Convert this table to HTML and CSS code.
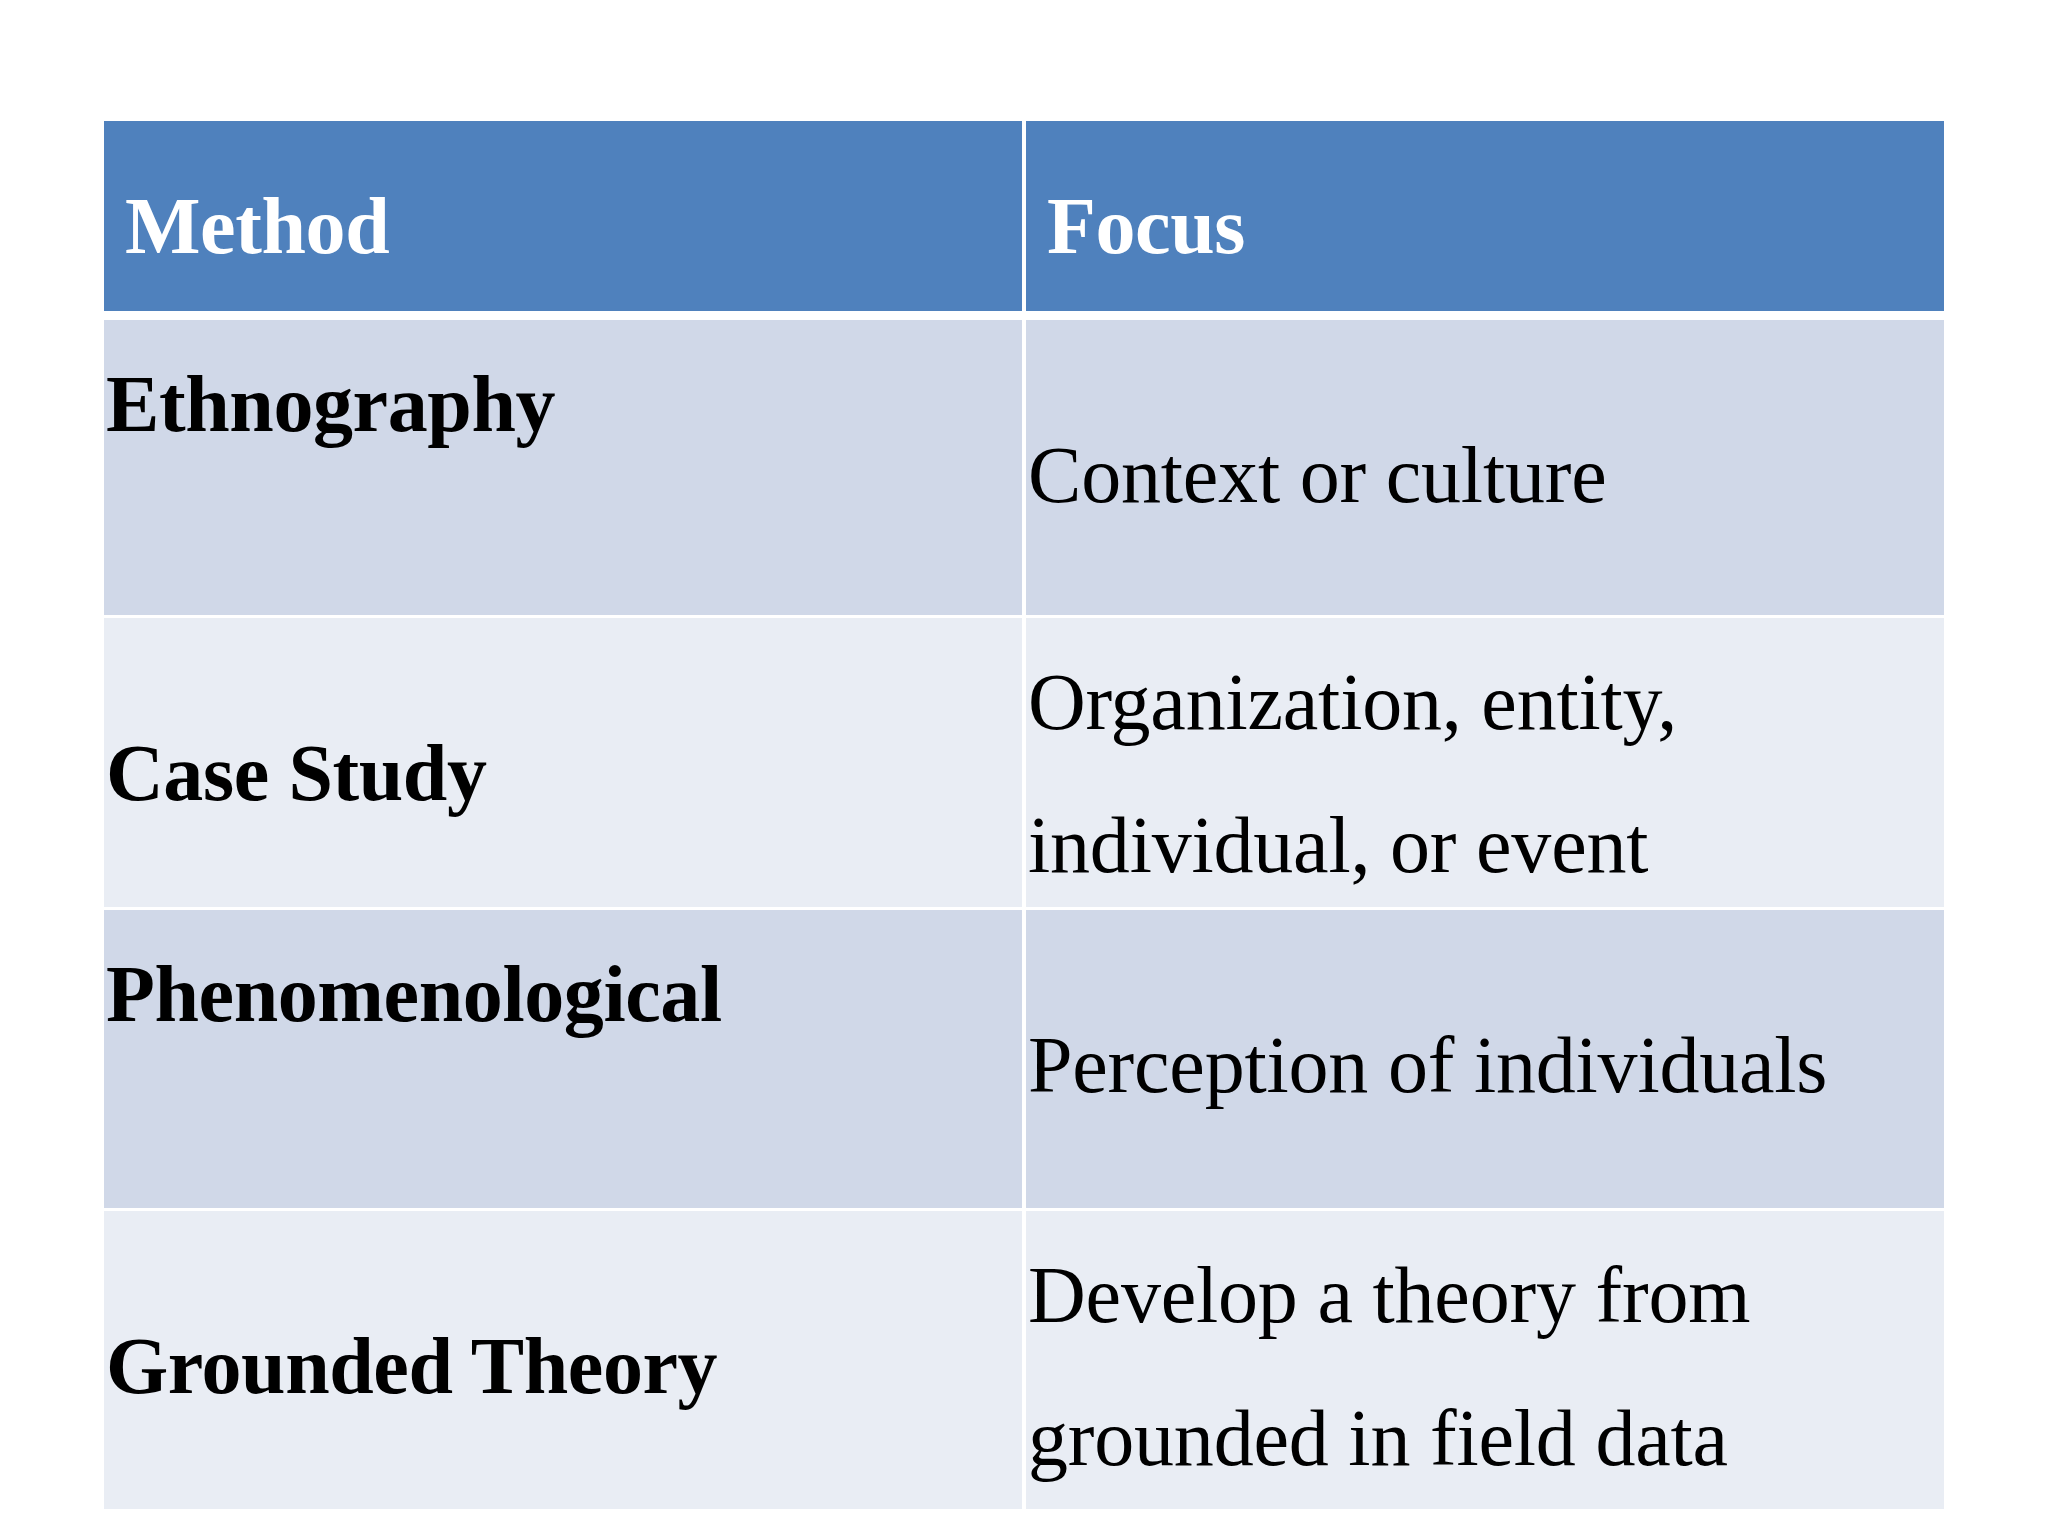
FILE: index.html
```html
<!DOCTYPE html>
<html lang="en">
<head>
<meta charset="utf-8">
<title>Qualitative Research Methods</title>
<link rel="stylesheet" href="styles.css">
</head>
<body>
<main class="slide">
  <div class="table">
    <div class="cell head">Method</div>
    <div class="cell head">Focus</div>

    <div class="cell odd r1 method top">Ethnography</div>
    <div class="cell odd r1 focus low">Context or culture</div>

    <div class="cell even r2 method low">Case Study</div>
    <div class="cell even r2 focus top">Organization, entity,<br>individual, or event</div>

    <div class="cell odd r3 method top">Phenomenological</div>
    <div class="cell odd r3 focus low">Perception of individuals</div>

    <div class="cell even r4 method low">Grounded Theory</div>
    <div class="cell even r4 focus top">Develop a theory from<br>grounded in field data</div>
  </div>
</main>
</body>
</html>
```

FILE: styles.css
```css
html, body {
  margin: 0;
  padding: 0;
  background: #ffffff;
}

body {
  width: 2048px;
  height: 1536px;
  overflow: hidden;
  font-family: "Liberation Serif", "Times New Roman", serif;
}

.slide {
  padding: 121px 0 0 104px;
}

.table {
  display: grid;
  grid-template-columns: 918px 918px;
  grid-template-rows: 196px 295px 289px 298px 298px;
  column-gap: 4px;
  row-gap: 3px;
}

.cell {
  box-sizing: border-box;
  font-size: 80px;
  line-height: 143px;
  color: #000000;
  white-space: nowrap;
  padding-left: 2px;
  letter-spacing: -0.2px;
}

.head {
  background: #4f81bd;
  color: #ffffff;
  font-weight: bold;
  letter-spacing: -0.4px;
  padding: 34px 0 0 21px;
  margin-bottom: 6px;
}

.odd {
  background: #d0d8e8;
}

.even {
  background: #e9edf4;
}

.method {
  font-weight: bold;
  letter-spacing: -0.4px;
}

.top {
  padding-top: 13px;
}

.low {
  padding-top: 84px;
}
```
